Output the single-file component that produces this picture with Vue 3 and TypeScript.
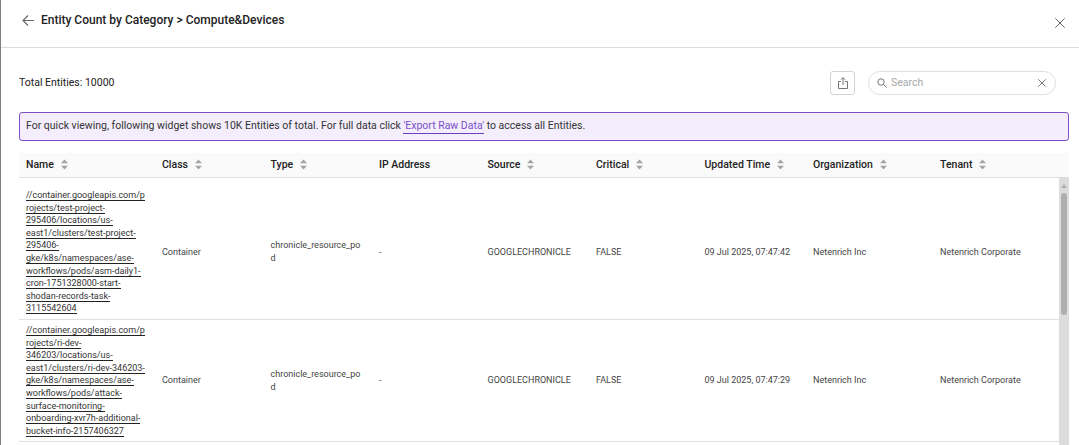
<script setup lang="ts">
interface Row {
  nameLines: string[]
  time: string
  first: boolean
}

const columns: { label: string; sortable: boolean }[] = [
  { label: 'Name', sortable: true },
  { label: 'Class', sortable: true },
  { label: 'Type', sortable: true },
  { label: 'IP Address', sortable: false },
  { label: 'Source', sortable: true },
  { label: 'Critical', sortable: true },
  { label: 'Updated Time', sortable: true },
  { label: 'Organization', sortable: true },
  { label: 'Tenant', sortable: true }
]

const rows: Row[] = [
  {
    nameLines: [
      '//container.googleapis.com/p',
      'rojects/test-project-',
      '295406/locations/us-',
      'east1/clusters/test-project-',
      '295406-',
      'gke/k8s/namespaces/ase-',
      'workflows/pods/asm-daily1-',
      'cron-1751328000-start-',
      'shodan-records-task-',
      '3115542604'
    ],
    time: '09 Jul 2025, 07:47:42',
    first: true
  },
  {
    nameLines: [
      '//container.googleapis.com/p',
      'rojects/ri-dev-',
      '346203/locations/us-',
      'east1/clusters/ri-dev-346203-',
      'gke/k8s/namespaces/ase-',
      'workflows/pods/attack-',
      'surface-monitoring-',
      'onboarding-xvr7h-additional-',
      'bucket-info-2157406327'
    ],
    time: '09 Jul 2025, 07:47:29',
    first: false
  }
]
</script>

<template>
  <div class="page">
    <header class="top">
      <div class="title-wrap">
        <svg class="back" width="12" height="11" viewBox="0 0 12 11" fill="none" stroke="#666" stroke-width="1.1">
          <path d="M12 5.5H1M6 0.5L1 5.5L6 10.5" />
        </svg>
        <h1 class="title">Entity Count by Category &gt; Compute&amp;Devices</h1>
      </div>
      <svg class="close" width="10" height="10" viewBox="0 0 10 10" fill="none" stroke="#666" stroke-width="1">
        <path d="M0.3 0.3L9.7 9.7M9.7 0.3L0.3 9.7" />
      </svg>
    </header>

    <section class="toolbar">
      <span class="total">Total Entities: 10000</span>
      <div class="tools">
        <button class="export" type="button" aria-label="Export">
          <svg width="10" height="12" viewBox="0 0 10 12" fill="none" stroke="#666" stroke-width="0.9">
            <path d="M3 4.5H0.5V11.5H9.5V4.5H7M5 8V0.8M3 2.6L5 0.6L7 2.6" />
          </svg>
        </button>
        <div class="search">
          <svg width="10" height="10" viewBox="0 0 10 10" fill="none" stroke="#777" stroke-width="1">
            <circle cx="4" cy="4" r="3.2" />
            <path d="M6.3 6.3L9.7 9.7" />
          </svg>
          <span class="placeholder">Search</span>
          <svg width="8" height="8" viewBox="0 0 8 8" fill="none" stroke="#666" stroke-width="0.9">
            <path d="M0.3 0.3L7.7 7.7M7.7 0.3L0.3 7.7" />
          </svg>
        </div>
      </div>
    </section>

    <div class="notice">
      For quick viewing, following widget shows 10K Entities of total. For full data click
      <a class="notice-link">'Export Raw Data'</a> to access all Entities.
    </div>

    <section class="grid-wrap">
      <table class="grid head">
        <colgroup>
          <col class="c-name" /><col class="c-std" /><col class="c-std" /><col class="c-std" /><col class="c-std" /><col class="c-std" /><col class="c-std" /><col class="c-org" /><col />
        </colgroup>
        <thead>
          <tr>
            <th v-for="col in columns" :key="col.label">
              <span class="th-in">
                {{ col.label }}
                <svg v-if="col.sortable" class="sort" width="7" height="11" viewBox="0 0 7 11" fill="#a3a3a3">
                  <path d="M3.5 0.5L7 4.2H0Z" />
                  <path d="M3.5 10.5L0 6.8H7Z" />
                </svg>
              </span>
            </th>
          </tr>
        </thead>
      </table>
      <div class="body-wrap">
        <table class="grid body">
          <colgroup>
            <col class="c-name" /><col class="c-std" /><col class="c-std" /><col class="c-std" /><col class="c-std" /><col class="c-std" /><col class="c-std" /><col class="c-org" /><col />
          </colgroup>
          <tbody>
            <tr v-for="row in rows" :key="row.time" :class="{ first: row.first }">
              <td>
                <template v-for="line in row.nameLines" :key="line">
                  <span class="link">{{ line }}</span><br />
                </template>
              </td>
              <td>Container</td>
              <td>chronicle_resource_pod</td>
              <td>-</td>
              <td>GOOGLECHRONICLE</td>
              <td>FALSE</td>
              <td>{{ row.time }}</td>
              <td>Netenrich Inc</td>
              <td>Netenrich Corporate</td>
            </tr>
          </tbody>
        </table>
        <div class="scrollbar">
          <span class="arrow"></span>
          <span class="thumb"></span>
        </div>
      </div>
    </section>
  </div>
</template>

<style>
html, body { margin: 0; background: #fff; overflow: hidden; }
</style>

<style scoped>
.page {
  width: 1079px;
  height: 445px;
  box-sizing: border-box;
  border-left: 1px solid #808080;
  font-family: Roboto, "Liberation Sans", sans-serif;
  color: #333;
  overflow: hidden;
  background: #fff;
}
.top {
  height: 47px;
  border-bottom: 1px solid #dcdcdc;
  display: flex;
  justify-content: space-between;
  padding: 0 14px 0 21px;
}
.title-wrap {
  display: flex;
  align-items: flex-start;
  gap: 7px;
  padding-top: 13px;
}
.back { flex: none; margin-top: 2px; }
.title {
  margin: 0;
  font-size: 12px;
  line-height: 14px;
  font-weight: 500;
  color: #222;
}
.close { margin-top: 18px; }
.toolbar {
  height: 64px;
  display: flex;
  align-items: center;
  justify-content: space-between;
  padding: 5px 23px 0 18px;
  box-sizing: border-box;
}
.total { font-size: 10.5px; color: #222; }
.tools { display: flex; align-items: center; gap: 13px; }
.export {
  width: 25px;
  height: 24px;
  padding: 0;
  border: 1px solid #d4d4d4;
  border-radius: 3px;
  background: #fff;
  display: flex;
  align-items: center;
  justify-content: center;
}
.search {
  width: 188px;
  height: 24px;
  box-sizing: border-box;
  border: 1px solid #e0e0e0;
  border-radius: 12px;
  display: flex;
  align-items: center;
  padding: 0 9px 0 8px;
  gap: 4px;
}
.placeholder { font-size: 10.5px; color: #a8a8a8; flex: 1; }
.notice {
  margin: 0 10px 0 18px;
  height: 29px;
  box-sizing: border-box;
  border: 1px solid #7a4fc9;
  border-radius: 3px;
  background: #f4eefc;
  padding: 0 6px;
  font-size: 10.5px;
  line-height: 26px;
  color: #333;
}
.notice-link { color: #7a4fc9; border-bottom: 1px solid #6b3fc0; padding-bottom: 1px; }
.grid-wrap { margin: 12px 0 0 18px; }
.grid {
  border-collapse: collapse;
  table-layout: fixed;
}
.head { width: 1050px; background: #fafafa; }
.body { width: 1040px; flex: none; }
.c-name { width: 136px; }
.c-std { width: 108.5px; }
.c-org { width: 127px; }
th {
  height: 22px;
  padding: 0 7px 2px;
  border-bottom: 1px solid #e0e0e0;
  text-align: left;
  font-size: 10.5px;
  font-weight: 500;
  color: #222;
}
.th-in { display: inline-flex; align-items: center; gap: 7px; }
td {
  padding: 4px 7px;
  border-bottom: 1px solid #e0e0e0;
  font-size: 9px;
  line-height: 12.6px;
  color: #444;
  overflow-wrap: anywhere;
  vertical-align: middle;
}
.first td { padding-top: 11px; }
.link { color: #333; border-bottom: 1px solid #222; }
.body-wrap { display: flex; align-items: flex-start; height: 268px; }
.scrollbar {
  width: 10px;
  height: 269px;
  margin-top: -1px;
  flex: none;
  background: #dcdcdc;
  display: flex;
  flex-direction: column;
  align-items: center;
}
.arrow {
  margin-top: 7px;
  width: 0;
  height: 0;
  border-left: 3px solid transparent;
  border-right: 3px solid transparent;
  border-bottom: 4px solid #b0b0b0;
}
.thumb {
  margin-top: 5px;
  width: 6px;
  height: 122px;
  border-radius: 3px;
  background: #aeaeae;
}
</style>
